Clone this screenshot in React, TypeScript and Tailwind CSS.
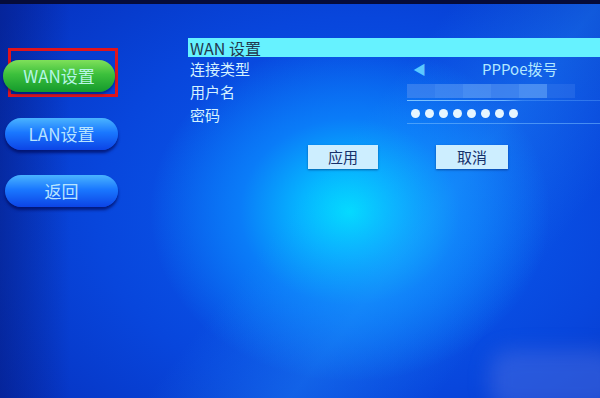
import React from 'react';

const dots = Array.from({ length: 8 });

const App: React.FC = () => {
  return (
    <div
      className="relative w-[600px] h-[398px] overflow-hidden font-['Noto_Sans_CJK_SC','Noto_Sans',sans-serif] bg-[radial-gradient(ellipse_200px_170px_at_350px_212px,#00e2ff_0%,#06b4ff_25%,#0a7cf8_55%,rgba(10,70,230,0)_100%),radial-gradient(ellipse_440px_320px_at_360px_210px,#0a62f4_0%,#0846dc_60%,#0632c0_100%)]"
    >
      {/* light beam toward the top right */}
      <div className="absolute inset-0 bg-[linear-gradient(128deg,rgba(0,0,0,0)_50%,rgba(40,160,255,0.3)_66%,rgba(0,0,0,0)_82%)]" />
      <div className="absolute inset-y-0 left-0 w-[70px] bg-[linear-gradient(to_right,rgba(5,20,110,0.45),rgba(5,20,110,0))]" />

      <div className="relative flex flex-col h-full">
        <div className="h-[4px] bg-[#060c3a]" />

        <div className="flex flex-1">
          {/* left menu */}
          <div className="w-[188px] flex flex-col pl-[8px] pt-[44px]">
            <div className="w-[110px] h-[49px] border-[3px] border-[#e0141c] flex items-center">
              <div className="-ml-[8px] mt-[6px] w-[113px] h-[32px] rounded-full bg-[linear-gradient(to_bottom,#7fe05a,#3cc03c_45%,#149a2c)] shadow-[0_2px_3px_rgba(0,20,80,0.6)] flex items-center justify-center text-[17px] text-[#b6f6e6]">
                WAN设置
              </div>
            </div>
            <div className="-ml-[3px] mt-[21px] w-[113px] h-[32px] rounded-full bg-[linear-gradient(to_bottom,#4ab4ff,#1a78ff_45%,#0c44e6)] shadow-[0_3px_3px_rgba(0,10,90,0.7)] flex items-center justify-center text-[17px] text-[#b8e4ff]">
              LAN设置
            </div>
            <div className="-ml-[3px] mt-[25px] w-[113px] h-[32px] rounded-full bg-[linear-gradient(to_bottom,#4ab4ff,#1a78ff_45%,#0c44e6)] shadow-[0_3px_3px_rgba(0,10,90,0.7)] flex items-center justify-center text-[17px] text-[#b8e4ff]">
              返回
            </div>
          </div>

          {/* settings panel */}
          <div className="flex-1 pt-[34px]">
            <div className="h-[19px] bg-[#66f2ff] pl-[2px] flex items-center text-[16px] leading-none text-[#23384e]">
              WAN 设置
            </div>

            <div className="grid grid-cols-[217px_1fr] text-[15px] leading-none text-[#d4f2ff] pl-[2px]">
              <div className="h-[23px] flex items-center">连接类型</div>
              <div className="h-[23px] flex items-center">
                <span className="text-[#5cc8ff] text-[13px] ml-[6px]">◀</span>
                <span className="ml-[56px] text-[#b2e8ff]">PPPoe拨号</span>
              </div>

              <div className="h-[23px] flex items-center">用户名</div>
              <div className="h-[23px] flex flex-col justify-center">
                <div className="flex h-[14px] mt-[2px]">
                  <div className="w-[28px] bg-[#4d8cf0]/60" />
                  <div className="w-[28px] bg-[#5a98f4]/60" />
                  <div className="w-[28px] bg-[#6aa6f6]/60" />
                  <div className="w-[28px] bg-[#5a98f4]/60" />
                  <div className="w-[28px] bg-[#6eaaf8]/60" />
                  <div className="w-[28px] bg-[#4a86ee]/30" />
                </div>
                <div className="h-[1px] mt-[2px] bg-[linear-gradient(to_right,#7cc4ff,#6ab4ff_50%,rgba(110,180,255,0.35)_60%)]" />
              </div>

              <div className="h-[23px] flex items-center">密码</div>
              <div className="h-[23px] flex flex-col justify-center">
                <div className="flex gap-[5px] ml-[4px] mt-[4px]">
                  {dots.map((_, i) => (
                    <div key={i} className="w-[9px] h-[9px] rounded-full bg-[#e6f6ff]" />
                  ))}
                </div>
                <div className="h-[1px] mt-[5px] bg-[rgba(120,190,255,0.55)]" />
              </div>
            </div>

            <div className="flex mt-[19px] pl-[120px] gap-[58px]">
              <div className="w-[70px] h-[24px] bg-[#cdeeff] shadow-[0_1px_2px_rgba(0,20,80,0.5)] flex items-center justify-center text-[15px] text-[#16306a]">
                应用
              </div>
              <div className="w-[72px] h-[24px] bg-[#cdeeff] shadow-[0_1px_2px_rgba(0,20,80,0.5)] flex items-center justify-center text-[15px] text-[#16306a]">
                取消
              </div>
            </div>
          </div>
        </div>
      </div>

      {/* blurred watermark patch */}
      <div className="absolute left-[490px] top-[350px] w-[130px] h-[60px] rounded-[20px] bg-[#5a78e0]/40 blur-[10px]" />
    </div>
  );
};

export default App;
